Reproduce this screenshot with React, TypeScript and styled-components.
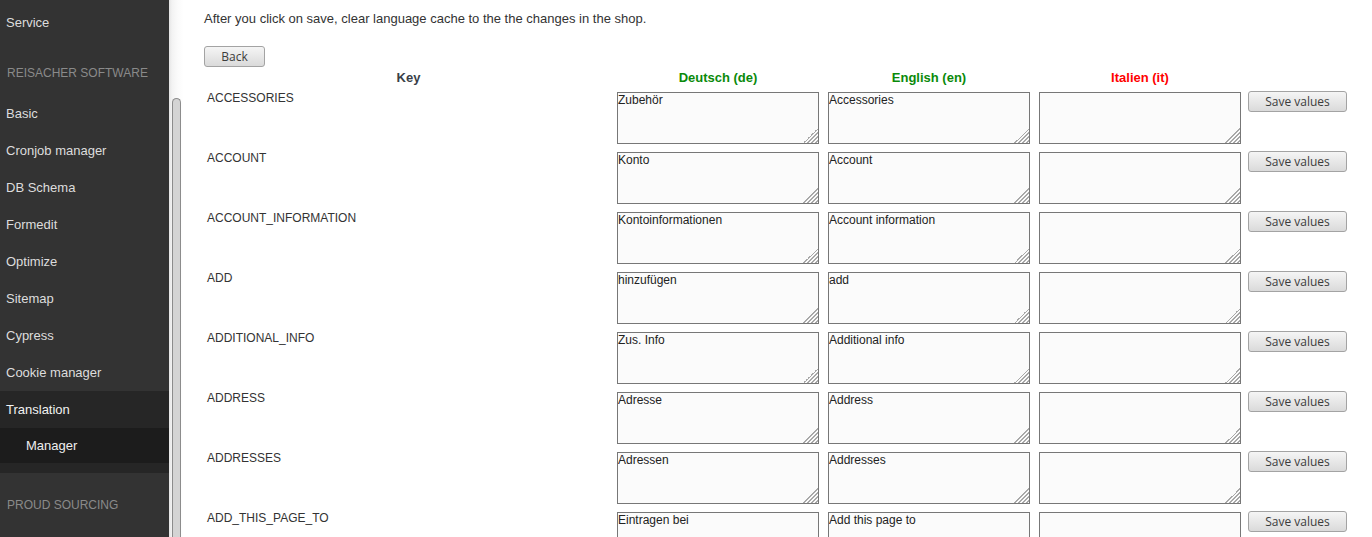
import React from "react";
import styled, { createGlobalStyle } from "styled-components";

const Global = createGlobalStyle`
  html, body { margin: 0; padding: 0; height: 100%; overflow: hidden; background: #fff; }
  body { font-family: "Liberation Sans", Arial, sans-serif; font-size: 13px; color: #333; }
`;

const Page = styled.div`
  display: flex;
  height: 537px;
  overflow: hidden;
`;

const Sidebar = styled.nav`
  width: 169px;
  flex: 0 0 169px;
  background: #333333;
  display: flex;
  flex-direction: column;
  padding-top: 4px;
  box-sizing: border-box;
`;

const NavItem = styled.div<{ $active?: boolean }>`
  height: 37px;
  display: flex;
  align-items: center;
  padding-left: 6px;
  line-height: 15px;
  color: ${(p) => (p.$active ? "#f2f2f2" : "#dddddd")};
  background: ${(p) => (p.$active ? "#262626" : "transparent")};
`;

const SubMenu = styled.div`
  background: #262626;
  padding-bottom: 10px;
`;

const SubItem = styled.div`
  height: 35px;
  display: flex;
  align-items: center;
  padding-left: 26px;
  background: #1c1c1c;
  color: #eeeeee;
`;

const SectionHead = styled.div`
  padding: 25px 7px 14px;
  line-height: 15px;
  font-size: 12px;
  color: #8a8a8a;
  text-transform: uppercase;
`;

const Track = styled.div`
  width: 15px;
  flex: 0 0 15px;
  background: linear-gradient(to right, #e4e4e4 0px, #f3f3f3 3px, #fbfbfb 9px, #ffffff 15px);
  display: flex;
  flex-direction: column;
`;

const Thumb = styled.div`
  margin: 98px 0 0 3px;
  width: 7px;
  flex: 1;
  border: 1px solid #8c8c8c;
  border-bottom: none;
  border-radius: 5px 5px 0 0;
  background: #d4d4d4;
`;

const Main = styled.main`
  flex: 1;
  padding: 11px 20px 0 20px;
  min-width: 0;
`;

const Intro = styled.p`
  margin: 0;
  line-height: 15px;
  color: #333;
`;

const Button = styled.button`
  box-sizing: border-box;
  height: 21px;
  padding: 0;
  border: 1px solid #a3a3a3;
  border-radius: 3px;
  background: linear-gradient(#f5f5f5, #dadada);
  color: #3c3c3c;
  font-family: "Open Sans", sans-serif;
  font-size: 12px;
  line-height: 19px;
  cursor: pointer;
`;

const BackButton = styled(Button)`
  margin-top: 20px;
  width: 61px;
  display: block;
`;

const SaveButton = styled(Button)`
  width: 99px;
  margin-top: 1px;
`;

const GridRow = styled.div<{ $h: number }>`
  display: grid;
  grid-template-columns: 413px 211px 211px 209px 99px;
  height: ${(p) => p.$h}px;
  align-items: start;
`;

const HeaderRow = styled(GridRow)`
  margin-top: 3px;
`;

const ColHead = styled.div<{ $color: string; $w: number }>`
  width: ${(p) => p.$w}px;
  text-align: center;
  font-weight: bold;
  line-height: 15px;
  color: ${(p) => p.$color};
`;

const KeyCell = styled.div`
  padding: 1px 0 0 3px;
  font-size: 12px;
  line-height: 15px;
  color: #333;
`;

const Field = styled.textarea`
  box-sizing: border-box;
  width: 202px;
  height: 52px;
  margin: 2px 0 0 0;
  padding: 0;
  border: 1px solid #777;
  border-radius: 0;
  background: #fbfbfb;
  color: #222;
  font-family: "Liberation Sans", Arial, sans-serif;
  font-size: 12px;
  line-height: 15px;
  resize: both;
  outline: none;
  display: block;

  &::-webkit-resizer {
    background:
      linear-gradient(to bottom right, #fbfbfb 50%, transparent 50%),
      repeating-linear-gradient(-45deg, #fbfbfb 0px, #fbfbfb 1.4px, #a8a8a8 1.4px, #a8a8a8 2.8px);
  }
`;

const rows: [string, string, string][] = [
  ["ACCESSORIES", "Zubehör", "Accessories"],
  ["ACCOUNT", "Konto", "Account"],
  ["ACCOUNT_INFORMATION", "Kontoinformationen", "Account information"],
  ["ADD", "hinzufügen", "add"],
  ["ADDITIONAL_INFO", "Zus. Info", "Additional info"],
  ["ADDRESS", "Adresse", "Address"],
  ["ADDRESSES", "Adressen", "Addresses"],
  ["ADD_THIS_PAGE_TO", "Eintragen bei", "Add this page to"],
];

const navItems = [
  "Basic",
  "Cronjob manager",
  "DB Schema",
  "Formedit",
  "Optimize",
  "Sitemap",
  "Cypress",
  "Cookie manager",
];

export default function App() {
  return (
    <>
      <Global />
      <Page>
        <Sidebar>
          <NavItem>Service</NavItem>
          <SectionHead>Reisacher Software</SectionHead>
          {navItems.map((n) => (
            <NavItem key={n}>{n}</NavItem>
          ))}
          <NavItem $active>Translation</NavItem>
          <SubMenu>
            <SubItem>Manager</SubItem>
          </SubMenu>
          <SectionHead>Proud Sourcing</SectionHead>
        </Sidebar>
        <Track>
          <Thumb />
        </Track>
        <Main>
          <Intro>After you click on save, clear language cache to the the changes in the shop.</Intro>
          <BackButton>Back</BackButton>
          <HeaderRow $h={20}>
            <ColHead $color="#3a3f48" $w={409}>Key</ColHead>
            <ColHead $color="#0a8a0a" $w={202}>Deutsch (de)</ColHead>
            <ColHead $color="#0a8a0a" $w={202}>English (en)</ColHead>
            <ColHead $color="#ff0000" $w={202}>Italien (it)</ColHead>
            <div />
          </HeaderRow>
          {rows.map(([k, de, en]) => (
            <GridRow $h={60} key={k}>
              <KeyCell>{k}</KeyCell>
              <Field defaultValue={de} />
              <Field defaultValue={en} />
              <Field defaultValue="" />
              <SaveButton>Save values</SaveButton>
            </GridRow>
          ))}
        </Main>
      </Page>
    </>
  );
}
